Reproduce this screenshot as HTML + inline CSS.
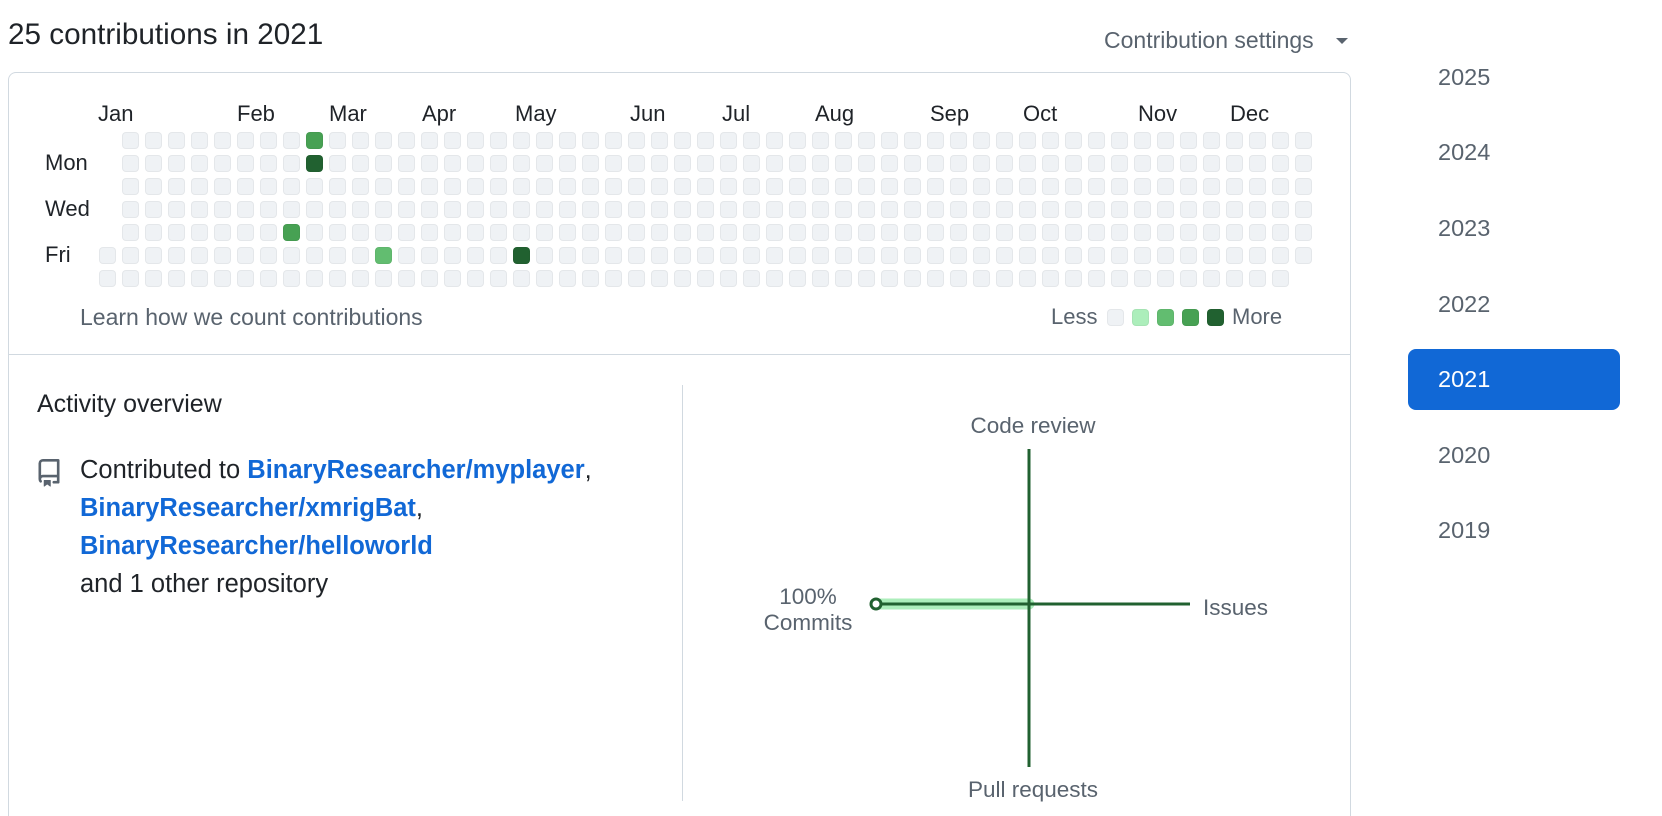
<!DOCTYPE html>
<html style="height:816px;overflow:hidden"><head><meta charset="utf-8"><style>
body{margin:0;width:1662px;height:816px;background:#fff;font-family:"Liberation Sans",sans-serif;position:relative;overflow:hidden;color:#1f2328}
.a{position:absolute;white-space:nowrap}
.box{position:absolute;left:8px;top:72px;width:1343px;height:744px;border:1px solid #d1d9e0;border-bottom:none;border-radius:8px 8px 0 0;box-sizing:border-box}
.c{position:absolute;width:17px;height:17px;border-radius:4px;background:#eff2f5;box-shadow:inset 0 0 0 1px rgba(31,35,40,0.05)}
.m{font-size:22px;top:101px}
.d{font-size:22px;left:45px}
.yr{position:absolute;left:1438px;font-size:23.5px;color:#59636e}
.lk{font-weight:bold;color:#1168d6}
</style></head><body>
<div class="a" style="left:8px;top:18px;font-size:29.7px">25 contributions in 2021</div>
<div class="a" style="left:1104px;top:27px;font-size:23px;color:#59636e">Contribution settings</div>
<div class="a" style="left:1336px;top:38px;width:0;height:0;border-left:6px solid transparent;border-right:6px solid transparent;border-top:6px solid #59636e"></div>
<div class="box"></div>
<div class="a" style="left:8px;top:354px;width:1343px;height:1px;background:#d1d9e0"></div>
<div class="a" style="left:682px;top:385px;width:1px;height:416px;background:#d1d9e0"></div>
<div id="g"></div>
<div class="a m" style="left:98px">Jan</div><div class="a m" style="left:237px">Feb</div><div class="a m" style="left:329px">Mar</div><div class="a m" style="left:422px">Apr</div><div class="a m" style="left:515px">May</div><div class="a m" style="left:630px">Jun</div><div class="a m" style="left:722px">Jul</div><div class="a m" style="left:815px">Aug</div><div class="a m" style="left:930px">Sep</div><div class="a m" style="left:1023px">Oct</div><div class="a m" style="left:1138px">Nov</div><div class="a m" style="left:1230px">Dec</div>
<div class="a d" style="top:150px">Mon</div><div class="a d" style="top:196px">Wed</div><div class="a d" style="top:242px">Fri</div>
<div class="a" style="left:80px;top:304px;font-size:23px;color:#59636e">Learn how we count contributions</div>
<div class="a" style="left:1051px;top:304px;font-size:22px;color:#59636e">Less</div>
<div class="c" style="left:1107px;top:309px"></div>
<div class="c" style="left:1132px;top:309px;background:#aceebb"></div>
<div class="c" style="left:1157px;top:309px;background:#62bd70"></div>
<div class="c" style="left:1182px;top:309px;background:#47a153"></div>
<div class="c" style="left:1207px;top:309px;background:#216130"></div>
<div class="a" style="left:1232px;top:304px;font-size:22px;color:#59636e">More</div>
<div class="yr" style="top:64px">2025</div>
<div class="yr" style="top:139px">2024</div>
<div class="yr" style="top:215px">2023</div>
<div class="yr" style="top:291px">2022</div>
<div class="a" style="left:1408px;top:349px;width:212px;height:61px;background:#1168d6;border-radius:8px"></div>
<div class="yr" style="top:366px;color:#fff">2021</div>
<div class="yr" style="top:442px">2020</div>
<div class="yr" style="top:517px">2019</div>
<div class="a" style="left:37px;top:390px;font-size:25px">Activity overview</div>
<svg class="a" style="left:35px;top:459px" width="28" height="28" viewBox="0 0 16 16"><path fill="#59636e" d="M2 2.5A2.5 2.5 0 0 1 4.5 0h8.75a.75.75 0 0 1 .75.75v12.5a.75.75 0 0 1-.75.75h-2.5a.75.75 0 0 1 0-1.5h1.75v-2h-8a1 1 0 0 0-.714 1.7.75.75 0 1 1-1.072 1.05A2.495 2.495 0 0 1 2 11.5Zm10.5-1h-8a1 1 0 0 0-1 1v6.708A2.486 2.486 0 0 1 4.5 9h8ZM5 12.25a.25.25 0 0 1 .25-.25h3.5a.25.25 0 0 1 .25.25v3.25a.25.25 0 0 1-.4.2l-1.45-1.087a.25.25 0 0 0-.3 0L5.4 15.7a.25.25 0 0 1-.4-.2Z"/></svg>
<div class="a" style="left:80px;top:451px;font-size:25.5px;line-height:38px">Contributed to <span class="lk">BinaryResearcher/myplayer</span>,<br><span class="lk">BinaryResearcher/xmrigBat</span>,<br><span class="lk">BinaryResearcher/helloworld</span><br>and 1 other repository</div>
<svg class="a" style="left:0;top:0" width="1662" height="816">
<line x1="876" y1="604" x2="1029" y2="604" stroke="#aceebb" stroke-width="11" stroke-linecap="round"/>
<line x1="1029" y1="449" x2="1029" y2="767" stroke="#216130" stroke-width="3"/>
<line x1="876" y1="604" x2="1190" y2="604" stroke="#216130" stroke-width="3"/>
<circle cx="876" cy="604" r="5" fill="#fff" stroke="#216130" stroke-width="3"/>
<g font-family="Liberation Sans, sans-serif" font-size="22.5" fill="#59636e" text-anchor="middle">
<text x="1033" y="433">Code review</text>
<text x="1033" y="797">Pull requests</text>
<text x="1203" y="615" text-anchor="start">Issues</text>
<text x="808" y="604">100%</text>
<text x="808" y="630">Commits</text>
</g></svg>
<script>
var g=document.getElementById('g'),h='';
var col={'9,0':'#47a153','9,1':'#216130','8,4':'#47a153','12,5':'#62bd70','18,5':'#216130'};
for(var w=0;w<53;w++)for(var r=0;r<7;r++){
 if(w==0&&r<5)continue; if(w==52&&r==6)continue;
 var bg=col[w+','+r];
 h+='<div class="c" style="left:'+(99+w*23)+'px;top:'+(132+r*23)+'px'+(bg?';background:'+bg:'')+'"></div>';
}
g.innerHTML=h;
</script>
</body></html>
